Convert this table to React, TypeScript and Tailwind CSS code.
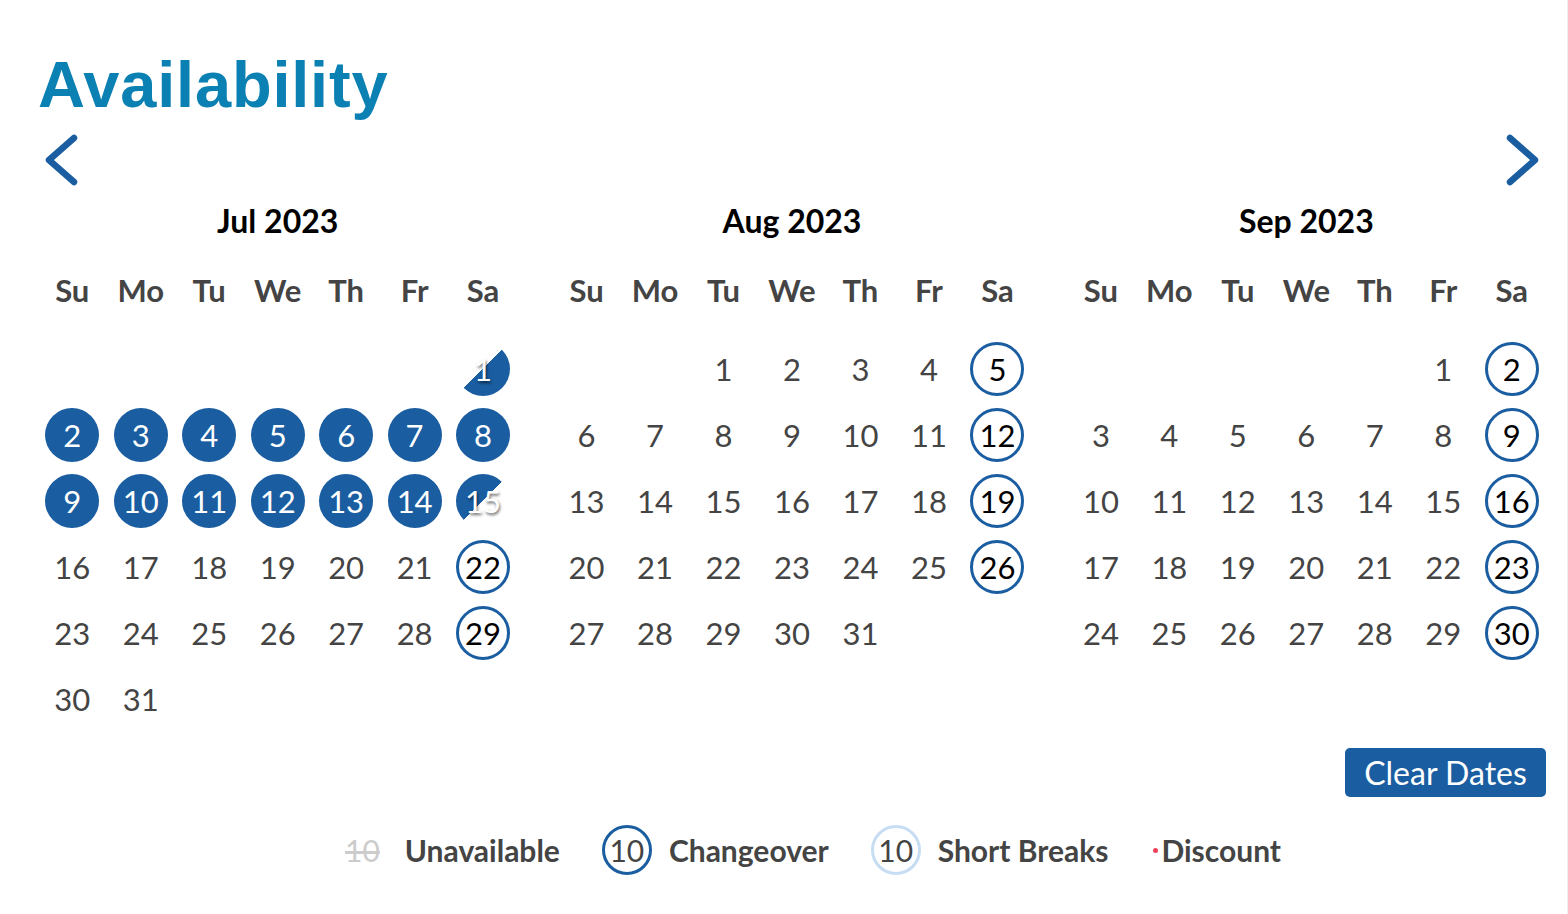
import React from "react";

const BLUE = "#1a5da1";

type Cell = {
  d: number;
  kind?: "full" | "halfEnd" | "halfStart" | "change";
};

function buildMonth(start: number, days: number, full: number[], change: number[], halfStart?: number, halfEnd?: number) {
  const cells: (Cell | null)[] = [];
  for (let i = 0; i < start; i++) cells.push(null);
  for (let d = 1; d <= days; d++) {
    let kind: Cell["kind"];
    if (full.includes(d)) kind = "full";
    if (change.includes(d)) kind = "change";
    if (d === halfStart) kind = "halfStart";
    if (d === halfEnd) kind = "halfEnd";
    cells.push({ d, kind });
  }
  return cells;
}

const months = [
  {
    title: "Jul 2023",
    cells: buildMonth(6, 31, [2, 3, 4, 5, 6, 7, 8, 9, 10, 11, 12, 13, 14], [22, 29], 1, 15),
  },
  { title: "Aug 2023", cells: buildMonth(2, 31, [], [5, 12, 19, 26]) },
  { title: "Sep 2023", cells: buildMonth(5, 30, [], [2, 9, 16, 23, 30]) },
];

const weekdays = ["Su", "Mo", "Tu", "We", "Th", "Fr", "Sa"];

function Day({ cell }: { cell: Cell | null }) {
  if (!cell) return <div className="h-[66px]" />;
  let circle = "";
  let text = "text-[#444]";
  if (cell.kind === "full") {
    circle = "bg-[#1a5da1]";
    text = "text-white";
  } else if (cell.kind === "change") {
    circle = "border-[3px] border-[#1a5da1] bg-white";
    text = "text-black";
  } else if (cell.kind === "halfStart") {
    circle = "bg-[linear-gradient(135deg,transparent_50%,#1a5da1_50%)]";
    text = "text-white [text-shadow:1px_2px_3px_rgba(0,0,0,0.6)]";
  } else if (cell.kind === "halfEnd") {
    circle = "bg-[linear-gradient(135deg,#1a5da1_50%,transparent_50%)]";
    text = "text-white [text-shadow:1px_2px_3px_rgba(0,0,0,0.6)]";
  }
  return (
    <div className="h-[66px] flex items-center justify-center">
      <div className={`w-[54px] h-[54px] rounded-full flex items-center justify-center text-[31px] ${circle} ${text}`}>
        {cell.d}
      </div>
    </div>
  );
}

function Chevron({ dir }: { dir: "left" | "right" }) {
  return (
    <svg width="36" height="54" viewBox="0 0 36 54" fill="none">
      <path
        d={dir === "left" ? "M31 5 L6 27 L31 49" : "M5 5 L30 27 L5 49"}
        stroke={BLUE}
        strokeWidth="6.5"
        strokeLinecap="round"
        strokeLinejoin="round"
      />
    </svg>
  );
}

export default function App() {
  return (
    <div className="w-[1568px] h-[914px] bg-white overflow-hidden border-r border-[#eee] font-['Lato','Noto_Sans',sans-serif]">
      <div className="pl-[38px] pr-[21px] pt-[52px]">
        <h1 className="font-['Liberation_Sans',Arial,sans-serif] font-bold text-[65px] leading-[65px] h-[65px] tracking-[0.8px] text-[#0a80b3]">
          Availability
        </h1>

        <div className="mt-[14px] h-[56px] flex items-start justify-between pl-[5px] pr-[5px] pt-[2px]">
          <Chevron dir="left" />
          <Chevron dir="right" />
        </div>

        <div className="mt-[12px] grid grid-cols-3 gap-x-[35px]">
          {months.map((m) => (
            <div key={m.title}>
              <div className="h-[44px] flex items-center justify-center text-[32px] font-bold text-black">{m.title}</div>
              <div className="mt-[14px] grid grid-cols-7 h-[66px] items-center">
                {weekdays.map((w) => (
                  <div key={w} className="text-center text-[31px] font-bold text-[#444]">
                    {w}
                  </div>
                ))}
              </div>
              <div className="mt-[13px] grid grid-cols-7">
                {Array.from({ length: 42 }).map((_, i) => (
                  <Day key={i} cell={m.cells[i] ?? null} />
                ))}
              </div>
            </div>
          ))}
        </div>

        <div className="mt-[16px] flex justify-end">
          <button className="h-[49px] w-[201px] rounded-[5px] bg-[#1a5da1] text-white text-[32px] leading-none">
            Clear Dates
          </button>
        </div>

        <div className="mt-[25px] h-[56px] flex items-center pl-[307px] text-[30px] text-[#444]">
          <span className="text-[#ccc] line-through">10</span>
          <span className="ml-[25px] font-bold">Unavailable</span>
          <span className="ml-[42px] w-[50px] h-[50px] rounded-full border-[3px] border-[#1a5da1] flex items-center justify-center">10</span>
          <span className="ml-[17px] font-bold">Changeover</span>
          <span className="ml-[42px] w-[50px] h-[50px] rounded-full border-[3px] border-[#c6ddf4] flex items-center justify-center">10</span>
          <span className="ml-[17px] font-bold">Short Breaks</span>
          <span className="ml-[45px] w-[5px] h-[5px] rounded-full bg-[#f0405a]" />
          <span className="ml-[3px] font-bold">Discount</span>
        </div>
      </div>
    </div>
  );
}
